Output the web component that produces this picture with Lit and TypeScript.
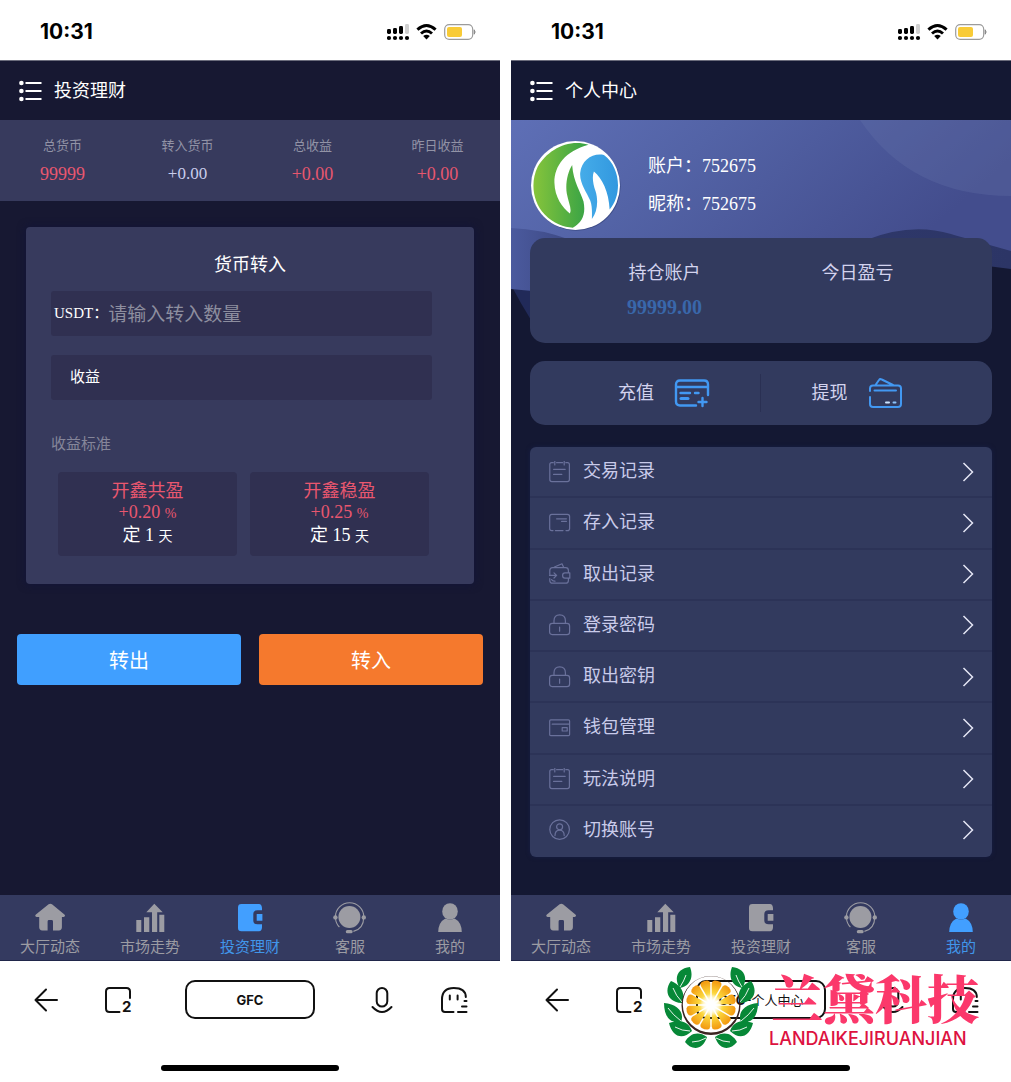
import { LitElement, html, css, svg } from "lit";
import { customElement, property } from "lit/decorators.js";
import { classMap } from "lit/directives/class-map.js";

type Tab = { id: string; label: string };

const TABS: Tab[] = [
  { id: "home", label: "大厅动态" },
  { id: "market", label: "市场走势" },
  { id: "invest", label: "投资理财" },
  { id: "service", label: "客服" },
  { id: "mine", label: "我的" },
];

const tabShapes: Record<string, unknown> = {
  home: svg`<path d="M15.6 2.3Q17.3 1 19 2.3L31.4 12.6Q33 14.4 30.6 15H28.9V25.3Q28.9 28.4 25.8 28.4H20V19.4Q20 18 18.6 18H16Q14.6 18 14.6 19.4V28.4H9.3Q6.2 28.4 6.2 25.3V15H3.6Q1.3 14.4 2.9 12.6Z"/>`,
  market: svg`<path d="M3.3 18H8.3V30H3.3ZM11 15.3H16.3V30H11ZM26.3 12.7H31.3V30H26.3ZM21.3 1.7L29.7 10.2H24.2V30H19V10.2H13.3Z"/>`,
  invest: svg`<path d="M8.4 2H26Q28.6 2 29 6V8.3H24.6Q20.3 8.3 20.3 12.2V18.5Q20.3 22.3 24.6 22.3H29V25.6Q28.8 29.3 26 29.3H8.4Q5 29.3 5 26V5.4Q5 2 8.4 2ZM23.7 12H29.4V18.7H23.7Z"/>`,
  service: svg`<circle cx="16.4" cy="15" r="11"/><circle cx="2.4" cy="15.4" r="2.2"/><circle cx="30.8" cy="15.4" r="2.2"/><rect x="12.8" y="28" width="6.8" height="3.2" rx="1.5"/><path d="M2.4 15A14.2 14.2 0 0 1 30.8 15Q30.6 27 20.4 29.4M2.4 16Q3 22 6.4 25" fill="none" stroke="currentColor" stroke-width="1.1"/>`,
  mine: svg`<ellipse cx="17" cy="9.4" rx="7.8" ry="8.2"/><path d="M12.4 16.4Q17 18.4 21.6 16.4Q28.6 20 28.8 30H5.2Q5.4 20 12.4 16.4Z"/>`,
};

const noteShape = svg`<path d="M4.3 1.7H2.6Q.8 1.7.8 3.6V18.6Q.8 20.6 2.8 20.6H18.4Q20.4 20.6 20.4 18.6V3.6Q20.4 1.7 18.6 1.7H16.8M7.6 1.7H13.6M5.8.2V4M15.2.2V4M4.6 8.3H16.2M4.6 13.4H12.8"/>`;
const lockShape = svg`<path d="M3.2 9.4H18Q20.6 9.4 20.6 12V18Q20.6 20.6 18 20.6H3.2Q.6 20.6.6 18V12Q.6 9.4 3.2 9.4ZM5 9.4V6.8Q5 .8 10.7.8T16.4 6.8V9.4M10.6 13V17.2"/>`;

const MENU: { label: string; shape: unknown }[] = [
  { label: "交易记录", shape: noteShape },
  { label: "存入记录", shape: svg`<path d="M4 18.6H2.8Q.7 18.6.7 16.4V4.6Q.7 2.4 2.8 2.4H18.4Q20.6 2.4 20.6 4.6V16.4Q20.6 18.6 18.4 18.6H17M6.4 18.6H14M7.6 6.8H17.4M12.6 9.4H17.4"/>` },
  { label: "取出记录", shape: svg`<path d="M.8 11.4V7.4Q.8 4.6 3.6 4.6H16.6Q19.4 4.6 19.4 7.4V9.6M19.4 15.4V17.4Q19.4 20.2 16.6 20.2H3.6Q.8 20.2.8 17.4V15.6M5.4 4L13 .8L14.6 4.2M16 9.8H20.8V15.2H16Q13.6 15.2 13.6 12.5T16 9.8ZM.4 12.4H7.4M5 9.8L7.6 12.4L5 15M2.6 16.6Q3.4 18.4 6 18.2"/>` },
  { label: "登录密码", shape: lockShape },
  { label: "取出密钥", shape: lockShape },
  { label: "钱包管理", shape: svg`<path d="M1.8 2.8H19.4Q20.6 2.8 20.6 4V17.4Q20.6 18.6 19.4 18.6H1.8Q.7 18.6.7 17.4V4Q.7 2.8 1.8 2.8ZM3.2 7.2H20.4M13.2 10.6H18.2V14H13.2Z"/>` },
  { label: "玩法说明", shape: noteShape },
  { label: "切换账号", shape: svg`<circle cx="10.6" cy="10.6" r="9.8"/><circle cx="10.6" cy="7.8" r="3"/><path d="M6 16.6Q6 11.2 10.6 11.2T15.2 16.6"/>` },
];

@customElement("status-bar")
class StatusBar extends LitElement {
  static styles = css`
    :host {
      display: flex;
      align-items: center;
      justify-content: space-between;
      height: 60px;
      padding: 4px 23px 0 40px;
      box-sizing: border-box;
      background: #fff;
      color: #000;
      font: 700 21px/24px Inter, sans-serif;
    }
    svg { display: block; }
  `;
  render() {
    return html`<span>10:31</span>
      <svg width="90" height="20" viewBox="0 0 90 20" aria-hidden="true">
        <g fill="#000">
          <rect x="0" y="7" width="4" height="5" rx="1.4" /><rect x="6" y="6" width="4" height="6" rx="1.4" />
          <rect x="12" y="4" width="4" height="8" rx="1.4" />
          <circle cx="2" cy="16" r="2.1" /><circle cx="8" cy="16" r="2.1" /><circle cx="14" cy="16" r="2.1" /><circle cx="20" cy="16" r="2.1" />
        </g>
        <rect x="18" y="2" width="4" height="10" rx="1.4" fill="#d0d0d0" />
        <g fill="none" stroke="#000" stroke-width="3"><path d="M30.4 7.6Q39.5 -.6 48.6 7.6" /><path d="M34 11.5Q39.5 6.6 45 11.5" /></g>
        <path d="M36.2 14Q39.5 11.4 42.8 14L39.5 17.4Z" fill="#000" />
        <rect x="57.7" y="2.7" width="28" height="14.6" rx="4.5" fill="#fff" stroke="#9b9b9b" stroke-width="1.2" />
        <rect x="60" y="5" width="15" height="10" rx="2" fill="#f8cb37" />
        <path d="M87.2 7.8Q89 10 87.2 12.2Z" fill="#888" stroke="#888" />
      </svg>`;
  }
}

@customElement("page-header")
class PageHeader extends LitElement {
  @property() heading = "";
  static styles = css`
    :host {
      display: flex;
      align-items: center;
      gap: 12px;
      height: 60px;
      padding: 0 18px;
      box-sizing: border-box;
      color: #fff;
      border-top: 1px solid #6b6c7c;
    }
    .menu { display: block; padding: 0; border: 0; background: none; color: inherit; }
    svg { display: block; }
    h1 { margin: 0; padding-bottom: 3px; font: 400 18px/24px "Noto Sans CJK SC", sans-serif; }
  `;
  render() {
    return html`<button class="menu" aria-label="菜单">
        <svg width="24" height="22" viewBox="0 0 24 22"><g fill="currentColor"><circle cx="3.4" cy="3" r="2.3" /><circle cx="3.4" cy="11" r="2.3" /><circle cx="3.4" cy="19" r="2.3" /><path d="M7.5 2H23.5V4H7.5ZM7.5 10H23.5V12H7.5ZM7.5 18H23.5V20H7.5Z" /></g></svg>
      </button>
      <h1>${this.heading}</h1>`;
  }
}

@customElement("tab-bar")
class TabBar extends LitElement {
  @property() active = "";
  static styles = css`
    nav {
      display: grid;
      grid-template-columns: repeat(5, 1fr);
      height: 66px;
      box-sizing: border-box;
      padding-top: 7px;
      background: #343a60;
      border-bottom: 1px solid #20264a;
    }
    .tab {
      display: flex;
      flex-direction: column;
      align-items: center;
      color: #9c9ca3;
      text-decoration: none;
      font: 400 15px/24px "Noto Sans CJK SC", sans-serif;
    }
    .tab svg { display: block; fill: currentColor; }
    .current { color: #4196ea; }
    .current svg { color: #429fff; }
  `;
  render() {
    return html`<nav>
      ${TABS.map(
        (t) => html`<a href="#${t.id}" class=${classMap({ tab: true, current: t.id === this.active })}>
          <svg width="34" height="32" viewBox="0 0 34 32" aria-hidden="true">${tabShapes[t.id]}</svg>
          <span>${t.label}</span></a>`
      )}
    </nav>`;
  }
}

@customElement("browser-bar")
class BrowserBar extends LitElement {
  @property() latin = "";
  @property() local = "";
  static styles = css`
    :host {
      display: flex;
      flex-direction: column;
      align-items: center;
      justify-content: space-between;
      height: 121px;
      padding: 19px 32px 11px;
      box-sizing: border-box;
      background: #fff;
      color: #111;
    }
    .tools { align-self: stretch; display: flex; justify-content: space-between; align-items: center; }
    .pair { display: flex; gap: 44px; }
    button { padding: 0; border: 0; background: none; color: inherit; }
    svg { display: block; overflow: visible; fill: none; stroke: currentColor; stroke-width: 2; stroke-linecap: round; stroke-linejoin: round; }
    .count { fill: currentColor; stroke: none; font: 700 15px Inter, sans-serif; }
    .address {
      width: 130px;
      height: 39px;
      border: 2px solid #111;
      border-radius: 10px;
      font: 700 13px/20px Inter, "Noto Sans CJK SC", sans-serif;
    }
    .local { font-weight: 400; }
    .indicator { width: 178px; height: 6px; border-radius: 3px; background: #000; }
  `;
  render() {
    return html`<div class="tools">
        <div class="pair">
          <button aria-label="返回"><svg width="28" height="28" viewBox="0 0 28 28"><path d="M25 14H3.5M14 3.5L3.5 14L14 24.5" /></svg></button>
          <button aria-label="标签页"><svg width="28" height="28" viewBox="0 0 28 28"><path d="M15.5 26H5.5Q2 26 2 22.5V5.5Q2 2 5.5 2H22.5Q26 2 26 5.5V12" /><text class="count" x="18" y="26">2</text></svg></button>
        </div>
        <button class="address">${this.latin}<span class="local">${this.local}</span></button>
        <div class="pair">
          <button aria-label="语音"><svg width="28" height="28" viewBox="0 0 28 28"><rect x="8.7" y="2" width="10.6" height="18.5" rx="5.3" /><path d="M4.5 21Q14 31 23.5 21" /></svg></button>
          <button aria-label="助手"><svg width="28" height="28" viewBox="0 0 28 28"><path d="M13.5 26H5Q2 26 2 23V13.5Q2 2 13.8 2T25.8 11M9.8 9.5V13.5M17.6 9.5V13.5M24.5 15H26.5M22 20.5H26.5M18 26H26.5" /></svg></button>
        </div>
      </div>
      <div class="indicator"></div>`;
  }
}

@customElement("invest-page")
class InvestPage extends LitElement {
  static styles = css`
    :host { display: block; color: #fff; font: 400 18px/24px "Liberation Serif", "Noto Sans CJK SC", serif; }
    .stats {
      display: grid;
      grid-template-columns: repeat(4, 1fr);
      margin: 0;
      padding: 14px 0 15px;
      background: #373a5d;
      text-align: center;
    }
    .stat { display: flex; flex-direction: column; gap: 4px; }
    dt { color: #9293a6; font-size: 13px; }
    dd { margin: 0; color: #e9576f; }
    .plain { color: #c9cdec; font-size: 17px; }
    .card { margin: 26px 26px 0; padding: 24px 42px 28px 25px; border-radius: 4px; background: #373a5d; box-shadow: 0 0 8px #12133a; }
    h2 { margin: 0 0 16px 17px; text-align: center; font: 400 18px/24px "Noto Sans CJK SC", sans-serif; }
    .field {
      display: flex;
      align-items: center;
      height: 45px;
      margin-bottom: 19px;
      padding: 0 0 2px 3px;
      box-sizing: border-box;
      border-radius: 3px;
      background: #303051;
      font-size: 15px;
    }
    .field label { white-space: nowrap; }
    .field input {
      flex: 1;
      min-width: 0;
      padding: 0;
      border: 0;
      outline: 0;
      background: none;
      color: #fff;
      font: 400 19px/28px "Noto Sans CJK SC", sans-serif;
    }
    .field input::placeholder { color: #8d8e9f; opacity: 1; }
    .profit { padding-left: 19px; }
    .caption { margin: 32px 0 0; color: #85869a; font-size: 15px; }
    .plans { display: grid; grid-template-columns: 1fr 1fr; gap: 13px; margin: 16px 3px 0 7px; }
    .plan {
      height: 84px;
      padding: 8px 0 0;
      box-sizing: border-box;
      border: 0;
      border-radius: 4px;
      background: #303051;
      color: #fff;
      font: inherit;
      line-height: 22px;
      display: flex;
      flex-direction: column;
      align-items: center;
    }
    .hot { color: #e9576f; }
    .rate { line-height: 20px; }
    .rate small, .term small { font-size: 14px; }
    .actions { display: grid; grid-template-columns: 1fr 1fr; gap: 18px; padding: 50px 17px 0; }
    .action {
      height: 51px;
      border: 0;
      border-radius: 4px;
      color: #fff;
      font: 400 20px/24px "Noto Sans CJK SC", sans-serif;
    }
    .out { background: #409fff; }
    .in { background: #f5792d; }
  `;
  plan(name: string, rate: string, days: string) {
    return html`<button class="plan">
      <span class="hot">${name}</span>
      <span class="hot rate">${rate} <small>%</small></span>
      <span class="term">定 ${days} <small>天</small></span>
    </button>`;
  }
  render() {
    return html`
      <dl class="stats">
        <div class="stat"><dt>总货币</dt><dd>99999</dd></div>
        <div class="stat"><dt>转入货币</dt><dd class="plain">+0.00</dd></div>
        <div class="stat"><dt>总收益</dt><dd>+0.00</dd></div>
        <div class="stat"><dt>昨日收益</dt><dd>+0.00</dd></div>
      </dl>
      <section class="card">
        <h2>货币转入</h2>
        <div class="field"><label for="amount">USDT：</label><input id="amount" type="text" placeholder="请输入转入数量" /></div>
        <div class="field profit">收益</div>
        <p class="caption">收益标准</p>
        <div class="plans">${this.plan("开鑫共盈", "+0.20", "1")}${this.plan("开鑫稳盈", "+0.25", "15")}</div>
      </section>
      <div class="actions"><button class="action out">转出</button><button class="action in">转入</button></div>
    `;
  }
}

@customElement("profile-page")
class ProfilePage extends LitElement {
  static styles = css`
    :host {
      display: grid;
      align-content: start;
      color: #fff;
      font: 400 18px/24px "Liberation Serif", "Noto Sans CJK SC", serif;
    }
    .backdrop { grid-area: 1 / 1; display: block; width: 100%; height: 200px; }
    .content { grid-area: 1 / 1; padding: 20px 19px 0; min-width: 0; }
    .user { display: flex; align-items: center; height: 90px; gap: 27px; }
    .avatar { display: block; }
    .lines { display: grid; gap: 14px; }
    .panel { display: grid; grid-template-columns: 1fr 1fr; border-radius: 15px; background: #323a5e; color: #d3d3ee; }
    .balance { height: 105px; margin-top: 8px; padding: 23px 38px 0; box-sizing: border-box; text-align: center; }
    .amount { display: block; margin-top: 10px; color: #3967aa; font-size: 20px; font-weight: 700; }
    .transfer { height: 64px; margin-top: 18px; align-items: center; padding: 0 38px; }
    .go { display: flex; justify-content: center; align-items: center; gap: 20px; height: 38px; padding: 0; border: 0; background: none; color: inherit; font: inherit; }
    .go:first-child { border-right: 1px solid #2a3053; }
    .go svg { display: block; fill: none; stroke: #4298f2; stroke-width: 2; stroke-linecap: round; }
    .list { display: grid; grid-auto-rows: 1fr; min-height: 410px; margin: 22px 0 0; padding: 0; list-style: none; border-radius: 6px; background: #323a5e; box-shadow: 0 0 4px #171d45; }
    .row { border-bottom: 2px solid #2c3357; }
    .row:last-child { border-color: transparent; }
    .link { display: flex; align-items: center; height: 100%; padding: 0 18px 0 19px; box-sizing: border-box; gap: 12px; color: #c9cbea; text-decoration: none; }
    .label { flex: 1; padding-bottom: 1px; }
    .glyph { fill: none; stroke: #6a719b; stroke-width: 1.2; stroke-linecap: round; stroke-linejoin: round; }
    .arrow { fill: none; stroke: #e4e5f4; stroke-width: 1.5; }
  `;
  render() {
    return html`
      <svg class="backdrop" viewBox="0 0 500 200" preserveAspectRatio="none" aria-hidden="true">
        <defs>
          <linearGradient id="sky" x1="0" y1="0" x2="1" y2=".3"><stop offset="0" stop-color="#5e6fb6" /><stop offset=".4" stop-color="#5363a6" /><stop offset="1" stop-color="#434d8d" /></linearGradient>
          <linearGradient id="low" x1="0" y1="0" x2="1" y2="0"><stop offset="0" stop-color="#4b5a9e" /><stop offset=".2" stop-color="#323c70" /><stop offset="1" stop-color="#2c3566" /></linearGradient>
        </defs>
        <path d="M0 165Q10 184 20 200H60V140H0Z" fill="#212a59" />
        <path d="M0 0H500V149Q470 146 440 140L60 175Q25 171 0 169Z" fill="url(#low)" />
        <path d="M0 0H500V131Q450 117 440 114Q400 102 355 120L60 120Q30 109 0 108Z" fill="url(#sky)" />
        <path d="M349 0Q400 76 500 76V0Z" fill="#6875ab" opacity=".28" />
      </svg>
      <div class="content">
        <div class="user">
          <svg class="avatar" width="91" height="91" viewBox="77 420 272 272" role="img" aria-label="头像">
            <defs>
              <linearGradient id="leaf"><stop offset="0" stop-color="#86c43b" /><stop offset="1" stop-color="#35a246" /></linearGradient>
              <linearGradient id="water" x1="0" y1="0" x2="1" y2="0"><stop offset="0" stop-color="#45ace9" /><stop offset="1" stop-color="#3298df" /></linearGradient>
            </defs>
            <circle cx="215" cy="558" r="133" fill="#263365" opacity=".5" />
            <circle cx="213" cy="556" r="133" fill="#fff" />
            <path d="M252 434C190 415 128 451 100 500C78 546 84 604 121 643C147 670 178 681 205 682C235 665 244 640 237 604C228 574 207 547 203 495C190 515 182 551 187 580C192 607 203 627 196 640C174 622 151 592 150 548C149 499 181 453 252 434Z" fill="url(#leaf)" />
            <path d="M298 465C265 458 231 479 227 519C225 548 246 575 257 601C264 620 262 642 262 656C278 636 282 602 273 573C265 550 262 529 268 514C292 533 313 575 315 628C353 584 348 502 298 465Z" fill="url(#water)" />
          </svg>
          <div class="lines"><span>账户：752675</span><span>昵称：752675</span></div>
        </div>
        <section class="panel balance">
          <div>持仓账户<strong class="amount">99999.00</strong></div>
          <div>今日盈亏</div>
        </section>
        <section class="panel transfer">
          <button class="go"><span>充值</span>
            <svg width="36" height="30" viewBox="0 0 36 30"><path d="M22 27.5H6Q2 27.5 2 23.5V6.5Q2 2.5 6 2.5H30Q34 2.5 34 6.5V17M2 9H34M6.5 15H16M21 15H24.5M28.5 20V28M24.5 24H32.5" stroke-width="2.4" /><path d="M7 20.5H14" stroke-width="3" /></svg></button>
          <button class="go"><span>提现</span>
            <svg width="36" height="32" viewBox="0 0 36 32"><path d="M2 14V11.5Q2 8.5 5 8.5H30Q33 8.5 33 11.5V27Q33 30 30 30H5Q2 30 2 27V20M6.5 13.5H28M7.5 8L11 3Q12 1.5 13.8 2.5L25 8" /><path d="M18 25.5H21" stroke="#cce4ff" /><path d="M25.5 25.5H27.5" stroke="#8cc2fa" /></svg></button>
        </section>
        <ul class="list">
          ${MENU.map(
            (m) => html`<li class="row"><a class="link" href="#">
              <svg class="glyph" width="22" height="22" viewBox="0 0 22 22" aria-hidden="true">${m.shape}</svg>
              <span class="label">${m.label}</span>
              <svg class="arrow" width="12" height="20" viewBox="0 0 12 20" aria-hidden="true"><path d="M1.5 1L10.5 10L1.5 19" /></svg>
            </a></li>`
          )}
        </ul>
      </div>
    `;
  }
}

@customElement("brand-mark")
class BrandMark extends LitElement {
  static styles = css`
    :host { display: flex; align-items: center; gap: 13px; pointer-events: none; }
    svg { display: block; }
    .words { display: grid; justify-items: start; white-space: nowrap; }
    .name { color: #fb386b; font: 900 52px/64px "Noto Serif CJK SC", "Noto Sans CJK SC", serif; }
    .latin { margin-left: -2px; color: #dd1240; font: 500 18px/20px Inter, sans-serif; }
  `;
  render() {
    const wreath = () => svg`
      <path fill="#078837" d="M26 2C14 3 9 13 16 23C26 21 30 12 26 2ZM7 16C0 25 3 37 18 38C22 28 17 20 7 16ZM0 38C0 51 6 59 17 57C21 47 13 39 0 38ZM5 58C8 71 18 76 28 66C24 55 15 55 5 58ZM21 77C28 86 39 85 43 72C34 65 25 69 21 77Z"/>
      <path fill="none" stroke="#fff" stroke-width=".9" d="M22 10Q20 16 16 22M9 23Q12 31 18 37M4 43Q9 50 17 56M11 62Q18 66 26 66M28 77Q35 77 42 73"/>`;
    const slices = Array.from(
      { length: 12 },
      (_, i) => svg`<path d="M0 -3L-4.9 -21Q-5.4 -23.6 -3 -24.6Q0 -25.6 3 -24.6Q5.4 -23.6 4.9 -21Z" transform="rotate(${i * 30 + 15})" />`
    );
    return html`<svg width="94" height="84" viewBox="0 0 94 84" aria-hidden="true">
        <defs>
          <radialGradient id="pulp" gradientUnits="userSpaceOnUse" cx="0" cy="0" r="25"><stop offset=".2" stop-color="#fffbd0" /><stop offset=".5" stop-color="#fbd53b" /><stop offset="1" stop-color="#f2960e" /></radialGradient>
          <radialGradient id="glow"><stop offset=".35" stop-color="#fff" /><stop offset="1" stop-color="#fff" stop-opacity="0" /></radialGradient>
        </defs>
        <g>${wreath()}</g>
        <g transform="translate(94 0) scale(-1 1)">${wreath()}</g>
        <path fill-rule="evenodd" fill="#3b2421" d="M47 11A29.5 29.5 0 1 0 47 70A29.5 29.5 0 1 0 47 11ZM47 11.2A28.200 28.200 0 1 1 47 67.600A28.200 28.200 0 1 1 47 11.200Z" />
        <g transform="translate(47 40)"><g fill="url(#pulp)">${slices}</g><circle r="11" fill="url(#glow)" /></g>
      </svg>
      <div class="words"><span class="name">兰黛科技</span><span class="latin">LANDAIKEJIRUANJIAN</span></div>`;
  }
}

@customElement("app-root")
class AppRoot extends LitElement {
  static styles = css`
    :host {
      display: grid;
      grid-template-columns: 1fr 1fr;
      gap: 11px;
      min-height: 100vh;
      background: #fff;
    }
    .phone { position: relative; display: flex; flex-direction: column; min-width: 0; }
    .screen { flex: 1; }
    .invest { background: #171832; }
    .profile { background: #141833; }
    .mark { position: absolute; right: 32px; bottom: 33px; }
  `;
  render() {
    return html`
      <section class="phone">
        <status-bar></status-bar>
        <main class="screen invest"><page-header heading="投资理财"></page-header><invest-page></invest-page></main>
        <tab-bar active="invest"></tab-bar>
        <browser-bar latin="GFC"></browser-bar>
      </section>
      <section class="phone">
        <status-bar></status-bar>
        <main class="screen profile"><page-header heading="个人中心"></page-header><profile-page></profile-page></main>
        <tab-bar active="mine"></tab-bar>
        <browser-bar latin="GFC-" local="个人中心"></browser-bar>
        <brand-mark class="mark"></brand-mark>
      </section>
    `;
  }
}
